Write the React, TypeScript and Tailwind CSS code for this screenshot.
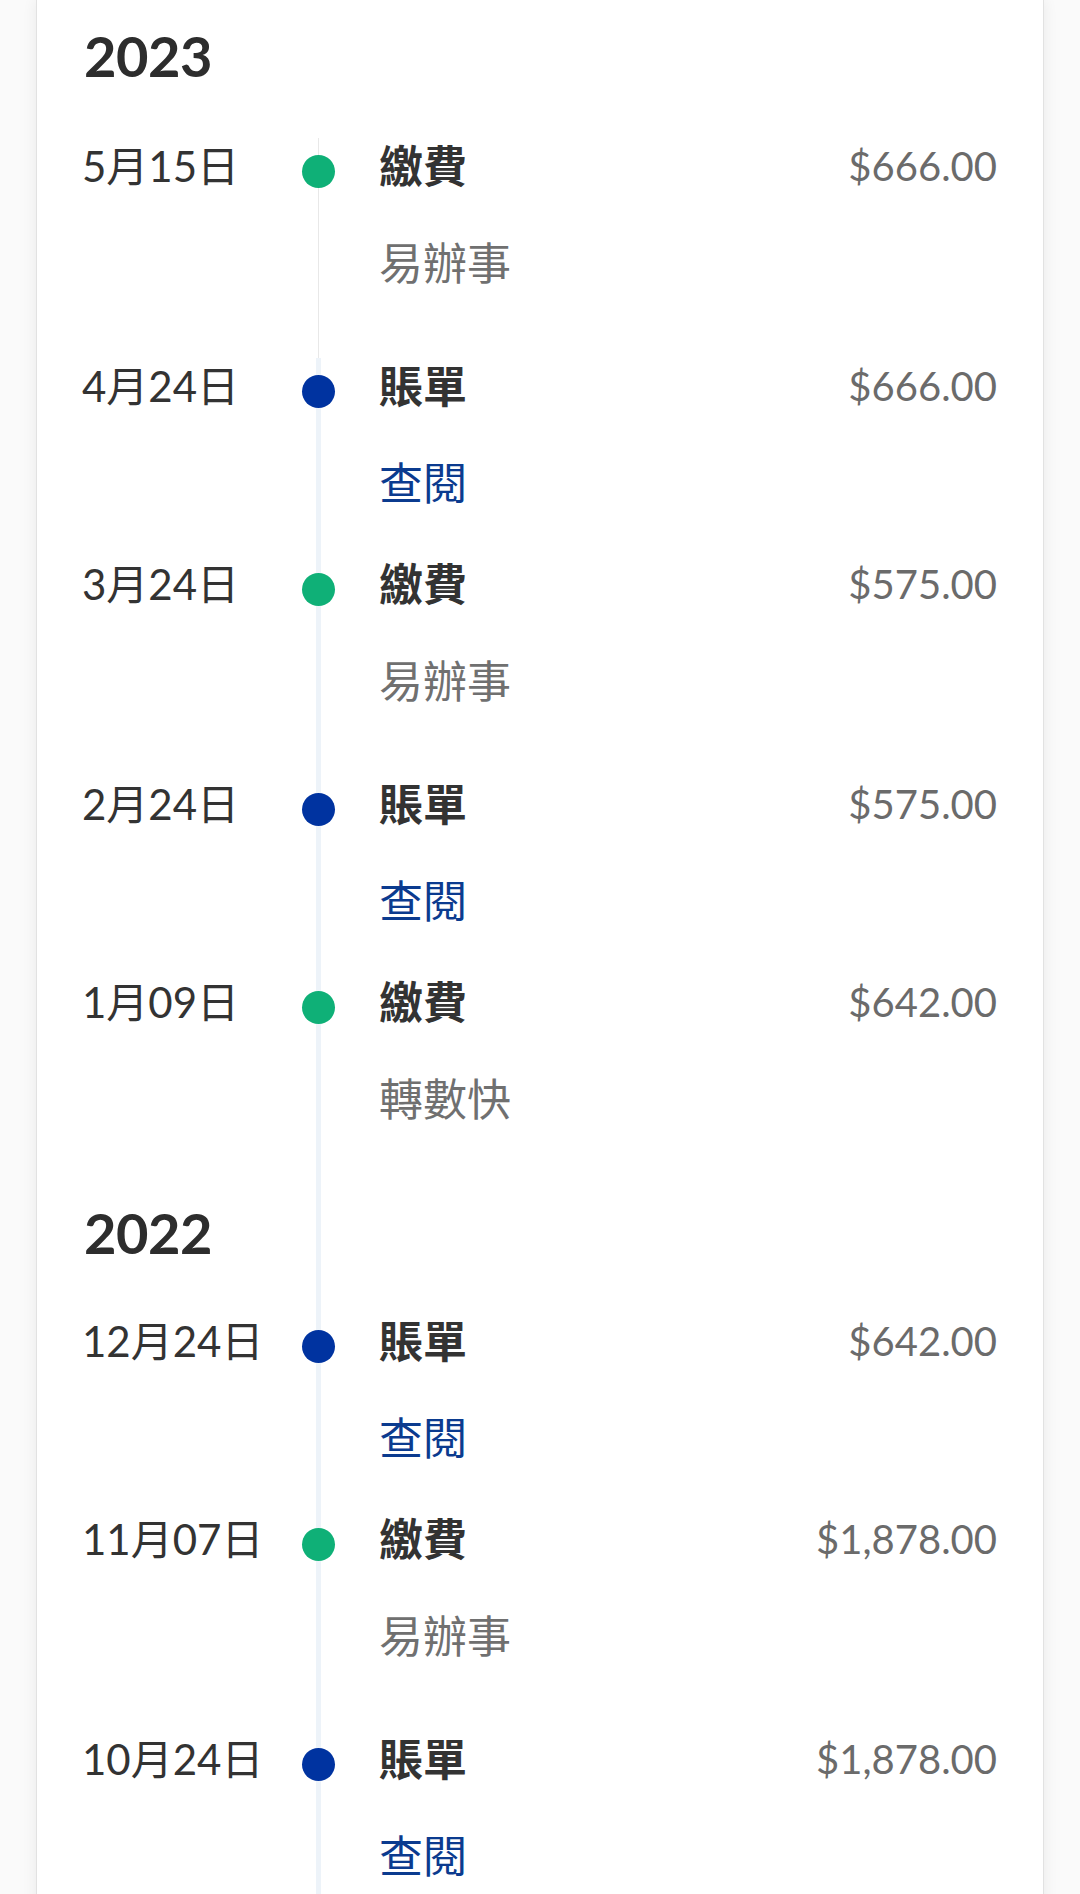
import React from "react";

type Item = {
  date: string;
  kind: "pay" | "bill";
  amount: string;
  sub: string;
};

type Section = { year: string; items: Item[] };

const sections: Section[] = [
  {
    year: "2023",
    items: [
      { date: "5月15日", kind: "pay", amount: "$666.00", sub: "易辦事" },
      { date: "4月24日", kind: "bill", amount: "$666.00", sub: "查閱" },
      { date: "3月24日", kind: "pay", amount: "$575.00", sub: "易辦事" },
      { date: "2月24日", kind: "bill", amount: "$575.00", sub: "查閱" },
      { date: "1月09日", kind: "pay", amount: "$642.00", sub: "轉數快" },
    ],
  },
  {
    year: "2022",
    items: [
      { date: "12月24日", kind: "bill", amount: "$642.00", sub: "查閱" },
      { date: "11月07日", kind: "pay", amount: "$1,878.00", sub: "易辦事" },
      { date: "10月24日", kind: "bill", amount: "$1,878.00", sub: "查閱" },
    ],
  },
];

const thickLine =
  "bg-[linear-gradient(to_right,#edf3f9,#edf3f9)] bg-no-repeat bg-center bg-[length:5px_100%]";
const thinLine =
  "bg-[linear-gradient(to_right,#e8e8e8,#e8e8e8)] bg-no-repeat bg-center bg-[length:1px_100%]";

function Row({ item, first }: { item: Item; first: boolean }) {
  const isPay = item.kind === "pay";
  return (
    <div className="flex">
      <div className="w-[219px] shrink-0 text-[42px] leading-[56px] text-[#333333]">
        {item.date}
      </div>
      <div
        className={`w-[34px] shrink-0 flex justify-center ${first ? thinLine : thickLine}`}
      >
        <div
          className={`mt-[17px] w-[33px] h-[33px] rounded-full ${
            isPay ? "bg-[#0fb077]" : "bg-[#0033a0]"
          }`}
        />
      </div>
      <div className={`flex-1 pl-[44px] ${isPay ? "pb-[67px]" : "pb-[45px]"}`}>
        <div className="flex h-[56px] items-center justify-between">
          <span className="text-[44px] font-bold leading-[56px] text-[#333333]">
            {isPay ? "繳費" : "賬單"}
          </span>
          <span className="text-[40px] leading-[56px] text-[#6b6b6b]">
            {item.amount}
          </span>
        </div>
        <div
          className={`mt-[41px] text-[44px] leading-[56px] ${
            isPay ? "text-[#707070]" : "text-[#0b3b8f]"
          }`}
        >
          {item.sub}
        </div>
      </div>
    </div>
  );
}

export default function App() {
  return (
    <div
      className="min-h-screen bg-[#fafafa] px-[36px]"
      style={{ fontFamily: 'Lato, "Noto Sans CJK TC", sans-serif' }}
    >
      <div className="min-h-screen bg-white border-x border-[#e2e2e2] shadow-[0_0_14px_rgba(0,0,0,0.07)] pl-[45px] pr-[46px]">
        {sections.map((s, si) => (
          <div key={s.year}>
            <div className="flex">
              <div
                className={`w-[219px] shrink-0 pl-[2px] text-[56px] font-bold leading-[64px] tracking-[-0.5px] text-[#2d2d2d] ${
                  si === 0 ? "pt-[24px] pb-[50px]" : "pt-[7px] pb-[48px]"
                }`}
              >
                {s.year}
              </div>
              <div className={`w-[34px] shrink-0 ${si === 0 ? "" : thickLine}`} />
              <div className="flex-1" />
            </div>
            {s.items.map((it, i) => (
              <Row key={it.date} item={it} first={si === 0 && i === 0} />
            ))}
          </div>
        ))}
      </div>
    </div>
  );
}
